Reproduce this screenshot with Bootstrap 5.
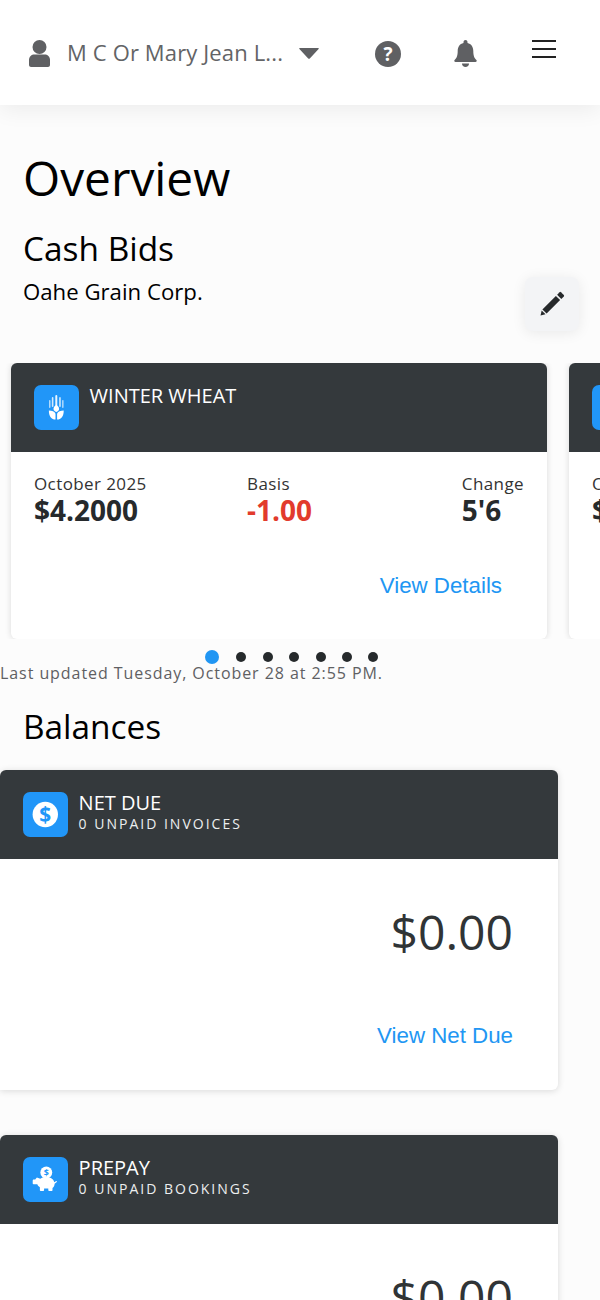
<!DOCTYPE html>
<html lang="en">
<head>
<meta charset="utf-8">
<title>Overview</title>
<link href="https://cdn.jsdelivr.net/npm/bootstrap@5.3.0/dist/css/bootstrap.min.css" rel="stylesheet">
<style>
html,body{height:1300px;overflow:hidden}
body{background:#fcfcfc;font-family:"Open Sans",sans-serif;color:#000}
.topbar{height:105px;background:#fff;box-shadow:0 4px 22px rgba(0,0,0,.07);padding:0 43px 0 29px}
.usericon{width:21px;height:27px;fill:#5f6063;margin-top:2px}
.username{font-size:22px;color:#636466;margin-left:17px;line-height:1;width:228px;white-space:nowrap;margin-top:-1px;letter-spacing:.14px}
.caret-shape{width:20px;height:12px;fill:#5f6063;margin-left:4px;margin-top:1px}
.helpicon{width:26px;height:26px;margin-left:56px;margin-top:2px}
.bellicon{width:23px;height:27px;fill:#5f6063;margin-left:53px;margin-top:2px}
.burger{width:24px;margin-left:55px;margin-top:-8px}
.burger i{display:block;height:2px;background:#222;margin-bottom:6px}
.burger i:last-child{margin-bottom:0}
.pagehead{padding:46px 23px 0;position:relative;height:258px}
.pagetitle{font-size:47.8px;line-height:54px;margin:0 0 21px;font-weight:400}
.subtitle{font-size:33.4px;line-height:44px;margin:0;font-weight:400}
.elevator{font-size:22.2px;line-height:30px;margin-top:7px}
.editbtn{position:absolute;right:21px;top:172px;width:54px;height:54px;background:#f3f4f6;border-radius:8px;box-shadow:0 2px 14px rgba(0,0,0,.08);border:0;padding:0}
.editbtn svg{width:28px;height:28px;fill:#26292b}
.bidrail{padding-left:11px;gap:22px;overflow:hidden;height:276px}
.bidcard{flex:0 0 536px;height:276px;background:#fff;border-radius:6px;box-shadow:0 0 6px rgba(0,0,0,.14);overflow:hidden}
.darkhead{height:89px;background:#34393c;color:#fff}
.bidcard .darkhead{padding:22px 23px}
.tile{width:44.6px;height:45px;background:#2196f8;border-radius:7px;flex:none}
.tile svg{width:44.6px;height:45px}
.bidname{font-size:20px;line-height:24px;margin-left:11px;margin-top:-1px}
.bidbody{padding:22px 23px 0 23px}
.firstcol{width:213px}
.cellabel{font-size:17px;line-height:20px;color:#333;letter-spacing:.4px}
.cellval{font-size:28px;font-weight:700;line-height:33px;color:#262a2c}
.cellval.neg{color:#e23b2c}
.detail-link{font-family:"Liberation Sans",sans-serif;font-size:22.3px;line-height:26px;color:#2196f3;text-decoration:none}
.bidlink{margin-top:46px;padding-right:22px;text-align:right}
.dotsrow{gap:16.4px;margin-top:11px;padding-left:205px;height:14px}
.dotsrow span{width:10px;height:10px;border-radius:50%;background:#262a2c;display:block}
.dotsrow span.on{width:14px;height:14px;background:#2196f3;margin-right:1px}
.updated{font-size:16px;line-height:20px;color:#5f6063;letter-spacing:.93px;margin:-1px 0 0}
.section-h{font-size:33.4px;line-height:44px;margin:21px 0 22px 23px;font-weight:400}
.balcard{width:558px;background:#fff;border-radius:0 6px 6px 0;border-top-left-radius:6px;box-shadow:0 1px 7px rgba(0,0,0,.14);overflow:hidden;margin-bottom:45px;height:320px}
.balcard .darkhead{padding:22px 23px}
.balname{font-size:20px;line-height:24px;margin-top:-1px}
.balsub{font-size:14px;line-height:17px;letter-spacing:2px;color:#eceeef}
.titlewrap{margin-left:11px}
.amount{font-size:48px;line-height:60px;color:#303436;text-align:right;padding:43px 45px 0 0}
.ballink{text-align:right;padding:61px 45px 0 0}
</style>
</head>
<body>
<header class="topbar d-flex align-items-center">
  <svg class="usericon" viewBox="0 0 21 27"><circle cx="10.500" cy="7" r="7"/><path d="M0 25v-5c0-3.500 2.500-5.500 5.500-5.500h10c3 0 5.500 2 5.500 5.500v5c0 1-1 2-2 2H2c-1 0-2-1-2-2z"/></svg>
  <div class="username">M C Or Mary Jean L...</div>
  <svg class="caret-shape" viewBox="0 0 20 12"><path d="M1 1c-.6 0-1 .6-.6 1.100l8.800 9.300c.4.400 1.200.400 1.600 0l8.800-9.300c.4-.5 0-1.100-.6-1.100z"/></svg>
  <svg class="helpicon" viewBox="0 0 26 26"><circle cx="13" cy="13" r="13" fill="#5f6063"/><text x="13" y="20" text-anchor="middle" font-family="Open Sans" font-weight="700" font-size="19" fill="#fff">?</text></svg>
  <svg class="bellicon" viewBox="0 0 23 27"><path d="M11.500 0c1.100 0 2 .9 2 2v1c3.800.9 5.800 4 5.800 8 0 5 1.200 7.200 3.100 9 .7.700.3 2-.8 2H1.400c-1.100 0-1.500-1.300-.8-2 1.900-1.800 3.100-4 3.100-9 0-4 2-7.100 5.800-8V2c0-1.100.9-2 2-2z"/><path d="M8 23.500h7c0 2-1.500 3.500-3.500 3.500S8 25.500 8 23.500z"/></svg>
  <div class="burger"><i></i><i></i><i></i></div>
</header>

<section class="pagehead">
  <h1 class="pagetitle">Overview</h1>
  <h2 class="subtitle">Cash Bids</h2>
  <div class="elevator">Oahe Grain Corp.</div>
  <button class="editbtn d-flex align-items-center justify-content-center" type="button" aria-label="Edit">
    <svg viewBox="0 0 28 28"><path d="M8.600 23.600 4.400 19.400 17.900 5.900 22.100 10.100z"/><path d="M2.500 25.500 3.700 20.500 7.500 24.300z"/><path d="M23.300 8.900 19.100 4.700 21.600 2.200a1 1 0 0 1 1.400 0l2.800 2.800a1 1 0 0 1 0 1.400z"/></svg>
  </button>
</section>

<div class="bidrail d-flex">
  <article class="bidcard">
    <div class="darkhead d-flex align-items-start">
      <div class="tile">
        <svg viewBox="0 0 45 45" fill="#fff">
          <rect x="21.500" y="10" width="2" height="11" rx="1" opacity=".9"/><rect x="18" y="12" width="1.600" height="10" rx=".8" opacity=".8"/><rect x="25.400" y="12" width="1.600" height="10" rx=".8" opacity=".8"/><rect x="15.200" y="15" width="1.400" height="8" rx=".7" opacity=".7"/><rect x="28.400" y="15" width="1.400" height="8" rx=".7" opacity=".7"/>
          <path d="M22.500 19.500c2 1.600 2.800 3 2.800 4.500s-1.200 2.500-2.800 3c-1.600-.5-2.800-1.500-2.800-3s.8-2.900 2.800-4.500z"/>
          <path d="M15 25.500c3 0 6 1 6.700 3.200v6c-4-.2-6.700-3-6.700-9.200zM30 25.500c-3 0-6 1-6.700 3.200v6c4-.2 6.700-3 6.700-9.200z"/>
        </svg>
      </div>
      <div class="bidname">WINTER WHEAT</div>
    </div>
    <div class="bidbody">
      <div class="d-flex">
        <div class="firstcol"><div class="cellabel">October 2025</div><div class="cellval">$4.2000</div></div>
        <div><div class="cellabel">Basis</div><div class="cellval neg">-1.00</div></div>
        <div class="ms-auto"><div class="cellabel">Change</div><div class="cellval">5'6</div></div>
      </div>
      <div class="bidlink"><a class="detail-link" href="#">View Details</a></div>
    </div>
  </article>
  <article class="bidcard">
    <div class="darkhead d-flex align-items-start"><div class="tile"></div></div>
    <div class="bidbody"><div class="cellabel">October 2025</div><div class="cellval">$4.2000</div></div>
  </article>
</div>

<div class="dotsrow d-flex align-items-center"><span class="on"></span><span></span><span></span><span></span><span></span><span></span><span></span></div>
<p class="updated">Last updated Tuesday, October 28 at 2:55 PM.</p>

<h2 class="section-h">Balances</h2>

<article class="balcard">
  <div class="darkhead d-flex align-items-start">
    <div class="tile">
      <svg viewBox="0 0 45 45"><circle cx="22.500" cy="22.500" r="12.800" fill="#fff"/><text x="22.500" y="30" text-anchor="middle" font-family="Open Sans" font-weight="700" font-size="21" fill="#2196f8">$</text></svg>
    </div>
    <div class="titlewrap"><div class="balname">NET DUE</div><div class="balsub">0 UNPAID INVOICES</div></div>
  </div>
  <div class="amount">$0.00</div>
  <div class="ballink"><a class="detail-link" href="#">View Net Due</a></div>
</article>

<article class="balcard">
  <div class="darkhead d-flex align-items-start">
    <div class="tile">
      <svg viewBox="0 0 45 45" fill="#fff">
        <circle cx="23.500" cy="15.500" r="6"/>
        <text x="23.500" y="18.700" text-anchor="middle" font-family="Open Sans" font-weight="700" font-size="9" fill="#2196f8">$</text>
        <path transform="translate(3 3.500) scale(.85)" d="M13 20l4 1.500c2-1.500 4.500-2 7-2 4.500 0 8.500 2 9.500 6l2.500-1.500 1 1-3 2.500c0 2-1 4-2.500 5v2.500c0 .6-.4 1-1 1h-3c-.6 0-1-.4-1-1V33h-5v2c0 .6-.4 1-1 1h-3c-.6 0-1-.4-1-1v-3.500c-1.500-1-2.500-2-3-3.500H9c-.6 0-1-.4-1-1v-3.500c0-.6.4-1 1-1h2c.5-1 1.200-1.800 2-2.500z"/>
      </svg>
    </div>
    <div class="titlewrap"><div class="balname">PREPAY</div><div class="balsub">0 UNPAID BOOKINGS</div></div>
  </div>
  <div class="amount">$0.00</div>
</article>
<script src="https://cdn.jsdelivr.net/npm/bootstrap@5.3.0/dist/js/bootstrap.bundle.min.js"></script>
</body>
</html>
